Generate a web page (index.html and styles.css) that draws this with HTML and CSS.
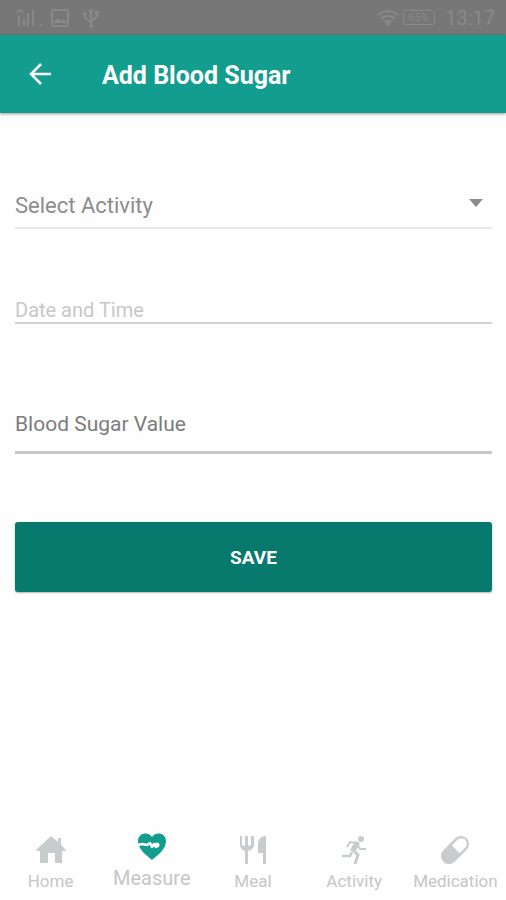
FILE: index.html
```html
<!DOCTYPE html>
<html lang="en">
<head>
  <meta charset="UTF-8" />
  <meta name="viewport" content="width=device-width, initial-scale=1" />
  <title>Add Blood Sugar</title>
  <link rel="stylesheet" href="styles.css">
</head>
<body>
  <div class="status-bar">
    <div class="status-group">
      <svg width="28" height="20" viewBox="0 0 28 20" fill="none" stroke="currentColor" stroke-width="2">
        <path d="M3 18V8M8 18v-7M12 18V5M17 18V2M1 4l3-2 3 2" />
        <path d="M25 16v2" />
      </svg>
      <svg width="20" height="18" viewBox="0 0 20 18">
        <rect x="2" y="1" width="16" height="16" rx="1" fill="none" stroke="currentColor" stroke-width="2" />
        <path d="M4 14V12l4-3 3 3 3-2 3 4z" fill="currentColor" />
      </svg>
      <svg class="usb" width="18" height="20" viewBox="0 0 18 20" fill="none" stroke="currentColor" stroke-width="2">
        <path d="M9 18V3M9 14L3 10V6M9 13l6-4V5" />
        <path d="M6 4l3-4 3 4z" fill="currentColor" stroke="none" />
        <circle cx="9" cy="18" r="2" fill="currentColor" stroke="none" />
        <circle cx="3" cy="6" r="2" fill="currentColor" stroke="none" />
        <path d="M13 3h4v4h-4z" fill="currentColor" stroke="none" />
      </svg>
    </div>
    <div class="status-group status-right">
      <svg width="22" height="16" viewBox="0 0 22 16" fill="none" stroke="currentColor" stroke-width="2">
        <path d="M1 5c6-5 14-5 20 0M4 9c4-4 10-4 14 0M7 12c3-2 5-2 8 0" />
        <circle cx="11" cy="14" r="1" />
      </svg>
      <span class="battery">65%</span>
      <span class="clock">13:17</span>
    </div>
  </div>

  <header>
    <button type="button" class="back-btn" aria-label="Back">
      <svg width="24" height="24" viewBox="0 0 24 24" fill="none" stroke="currentColor" stroke-width="2.5">
        <path d="M23 12H3M13 2L3 12l10 10" />
      </svg>
    </button>
    <h1>Add Blood Sugar</h1>
  </header>

  <main>
    <form id="sugarForm">
      <div class="field field-activity">
        <select id="activity" name="activity" aria-label="Select Activity">
          <option value="">Select Activity</option>
        </select>
        <svg class="arrow" width="14" height="8" viewBox="0 0 14 8">
          <path d="M0 0h14L7 8z" fill="currentColor" />
        </svg>
      </div>

      <div class="field field-date">
        <input type="text" id="dateTime" name="dateTime" placeholder="Date and Time" aria-label="Date and Time" />
      </div>

      <div class="field field-value">
        <input type="text" inputmode="decimal" id="sugarValue" name="sugarValue" placeholder="Blood Sugar Value" aria-label="Blood Sugar Value" />
      </div>

      <button type="submit" class="save-btn">SAVE</button>
    </form>
  </main>

  <nav>
    <a href="#home" class="tab">
      <svg width="30" height="28" viewBox="0 0 30 28" fill="currentColor">
        <path d="M15 0l7 6V2h3v7l5 5-1 1h-3v12h-7V17h-7v10H4V15H1l-1-1z" />
      </svg>
      <span>Home</span>
    </a>
    <a href="#measure" class="tab active">
      <svg width="30" height="28" viewBox="0 0 30 28">
        <path d="M15 27C9 22 1 16 1 8c0-8 10-10 14-4 4-6 14-4 14 4 0 8-8 14-14 19z" fill="currentColor" />
        <path d="M1 12l4-1 5 1 3-2 2 4 2-3 2 3 2-2" fill="none" stroke="#fff" stroke-width="2.5" stroke-linejoin="round" />
        <circle cx="20" cy="12" r="2.5" fill="#fff" />
      </svg>
      <span>Measure</span>
    </a>
    <a href="#meal" class="tab">
      <svg width="30" height="28" viewBox="0 0 30 28" fill="currentColor">
        <path d="M2 0h2v9l3 1V0h3v10l3-1V0h3v9c0 3-2 5-6 6v13H7V15c-3-1-5-3-5-6z" />
        <path d="M28 0v28h-3V17h-5V8c0-5 3-8 8-8z" />
      </svg>
      <span>Meal</span>
    </a>
    <a href="#activity" class="tab">
      <svg width="30" height="28" viewBox="0 0 30 28" fill="none" stroke="currentColor">
        <circle cx="22" cy="3" r="3" fill="currentColor" stroke="none" />
        <path d="M8 11l3-5 7 1" stroke-width="2" />
        <path d="M11 15l2-5 4-5 4 2-4 8z" fill="currentColor" stroke="none" />
        <path d="M18 8l3 5h6" stroke-width="2" />
        <path d="M13 13l6 6-3 9" stroke-width="3" />
        <path d="M13 16l-2 4H3" stroke-width="2.5" />
      </svg>
      <span>Activity</span>
    </a>
    <a href="#medication" class="tab">
      <svg width="30" height="28" viewBox="0 0 30 28">
        <g transform="rotate(-45 15 14)">
          <rect x="-1.5" y="6" width="33" height="16" rx="8" fill="currentColor" />
          <path d="M16 8.5h8a5.5 5.5 0 0 1 0 11h-8z" fill="#fff" />
        </g>
      </svg>
      <span>Medication</span>
    </a>
  </nav>
</body>
</html>
```

FILE: styles.css
```css
* {
  box-sizing: border-box;
}

body {
  margin: 0;
  font-family: Roboto, sans-serif;
  background-color: #fefefe;
  display: flex;
  flex-direction: column;
  min-height: 100vh;
}

.status-bar {
  display: flex;
  align-items: center;
  justify-content: space-between;
  height: 35px;
  padding: 0 11px 0 16px;
  background-color: #777;
  color: #898989;
}

.status-group {
  display: flex;
  align-items: center;
  gap: 6px;
}

.status-right {
  gap: 4px;
}

.usb {
  margin-left: 6px;
}

.battery {
  width: 32px;
  border: 1px solid #898989;
  border-radius: 3px;
  font-size: 11px;
  line-height: 13px;
  padding-left: 4px;
  font-style: italic;
}

.clock {
  font-size: 20px;
  line-height: 24px;
  margin-left: 6px;
}

header {
  display: flex;
  align-items: center;
  height: 78px;
  padding: 0 28px;
  gap: 50px;
  background-color: #129d8e;
  color: white;
  box-shadow: 0 1px 3px rgba(0,0,0,0.4);
}

.back-btn {
  display: flex;
  padding: 0;
  border: none;
  background: none;
  color: inherit;
  cursor: pointer;
}

header h1 {
  margin: 0;
  padding-top: 4px;
  font-size: 25px;
  line-height: 32px;
  font-weight: bold;
}

main {
  flex-grow: 1;
  padding: 69px 14px 20px 15px;
}

.field {
  position: relative;
}

.field select,
.field input {
  display: block;
  width: 100%;
  margin: 0;
  padding: 0;
  border: none;
  border-radius: 0;
  background: transparent;
  font-family: inherit;
  outline: none;
}

.field select {
  appearance: none;
  height: 47px;
  padding-top: 2px;
  border-bottom: 2px solid #e6e6e6;
  font-size: 22px;
  color: #8c8c8c;
}

.arrow {
  position: absolute;
  top: 17px;
  right: 9px;
  color: #8c8c8c;
  pointer-events: none;
}

.field-date {
  margin-top: 68px;
}

.field-date input {
  height: 27px;
  border-bottom: 2px solid #d2d2d2;
  font-size: 20px;
}

.field-date input::placeholder {
  color: #c8c8c8;
}

.field-value {
  margin-top: 72px;
}

.field-value input {
  height: 58px;
  border-bottom: 3px solid #c6c6c6;
  font-size: 21px;
}

.field-value input::placeholder {
  color: #7c7c7c;
}

.save-btn {
  display: block;
  width: 100%;
  height: 70px;
  margin-top: 68px;
  border: none;
  border-radius: 3px;
  background-color: #07796d;
  color: white;
  font-family: inherit;
  font-size: 19px;
  font-weight: bold;
  cursor: pointer;
  box-shadow: 0 1px 2px rgba(0,0,0,0.3);
}

nav {
  display: grid;
  grid-template-columns: repeat(5, 1fr);
  padding-bottom: 8px;
}

.tab {
  display: flex;
  flex-direction: column;
  align-items: center;
  gap: 6px;
  color: #c7cdcd;
  font-size: 17px;
  line-height: 22px;
  text-decoration: none;
}

.tab span {
  color: #c6c6c6;
}

.tab.active {
  color: #129d8e;
  font-size: 20px;
  margin-top: -3px;
}
```
